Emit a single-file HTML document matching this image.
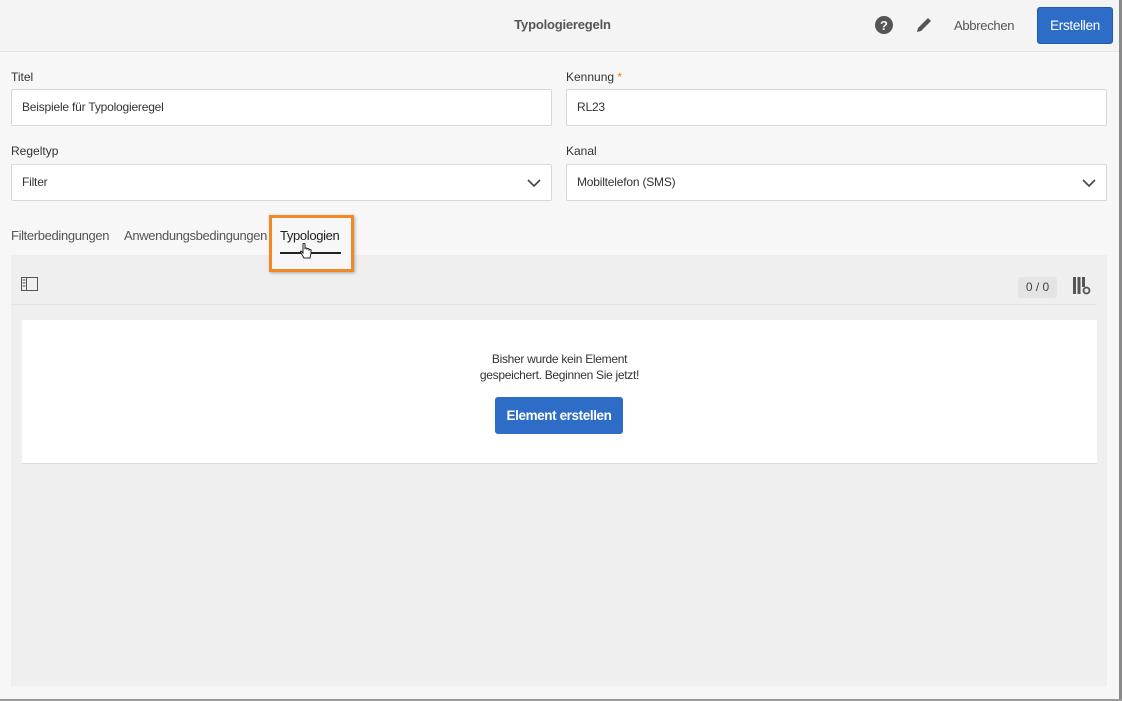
<!DOCTYPE html>
<html><head><meta charset="utf-8"><style>
*{box-sizing:border-box;margin:0;padding:0}
body{width:1122px;height:701px;background:#f7f7f7;font-family:"Liberation Sans",sans-serif;font-size:12px;color:#333;position:relative;overflow:hidden}
.abs{position:absolute}
.hdr{left:0;top:0;width:1119px;height:52px;background:#f4f4f4;border-bottom:1px solid #e6e6e6}
.lbl{font-size:12px;color:#333}
.inp{background:#fff;border:1px solid #d8d8d8;border-radius:2px;height:37px;padding:0 10px;line-height:35px;font-size:12px;color:#333;letter-spacing:-0.2px}
.chev{position:absolute;right:10px;top:11px}
.tab{font-size:13px;color:#555;top:228px;letter-spacing:-0.35px}
</style></head><body>
<div class="abs" style="right:0;top:0;width:3px;height:701px;background:#8a8a8a"></div>
<div class="abs" style="left:0;bottom:0;width:1122px;height:2px;background:#9a9a9a"></div>
<div class="abs hdr"></div>
<div class="abs" style="left:0;width:1125px;top:17px;text-align:center;font-size:13px;font-weight:bold;color:#555;letter-spacing:-0.2px">Typologieregeln</div>
<svg class="abs" style="left:875px;top:16px" width="18" height="18" viewBox="0 0 18 18"><circle cx="9" cy="9" r="9" fill="#555"/><text x="9" y="14" text-anchor="middle" font-family="Liberation Sans" font-weight="bold" font-size="13" fill="#f4f4f4">?</text></svg>
<svg class="abs" style="left:914px;top:15px" width="20" height="20" viewBox="0 0 20 20"><path d="M3 17 L4 13 L14 3 L17 6 L7 16 Z" fill="#555"/></svg>
<div class="abs" style="left:954px;top:18px;font-size:13px;color:#555;letter-spacing:-0.3px">Abbrechen</div>
<div class="abs" style="left:1037px;top:7px;width:76px;height:37px;background:#2d6cc7;border:1px solid #1f5bb0;border-radius:3px;color:#fff;font-size:13.5px;line-height:35px;text-align:center;letter-spacing:-0.3px">Erstellen</div>

<div class="abs lbl" style="left:11px;top:70px">Titel</div>
<div class="abs lbl" style="left:566px;top:70px">Kennung <span style="color:#e68619">*</span></div>
<div class="abs inp" style="left:11px;top:89px;width:541px">Beispiele für Typologieregel</div>
<div class="abs inp" style="left:566px;top:89px;width:541px">RL23</div>
<div class="abs lbl" style="left:11px;top:144px">Regeltyp</div>
<div class="abs lbl" style="left:566px;top:144px">Kanal</div>
<div class="abs inp" style="left:11px;top:164px;width:541px">Filter<svg class="chev" width="14" height="14" viewBox="0 0 14 14"><path d="M1 4 L7 10 L13 4" fill="none" stroke="#444" stroke-width="1.6"/></svg></div>
<div class="abs inp" style="left:566px;top:164px;width:541px">Mobiltelefon (SMS)<svg class="chev" width="14" height="14" viewBox="0 0 14 14"><path d="M1 4 L7 10 L13 4" fill="none" stroke="#444" stroke-width="1.6"/></svg></div>

<div class="abs" style="left:11px;top:255px;width:1096px;height:431px;background:#efefef"></div>
<div class="abs" style="left:11px;top:304px;width:1086px;height:1px;background:#e4e4e4"></div>
<div class="abs tab" style="left:11px">Filterbedingungen</div>
<div class="abs tab" style="left:124px">Anwendungsbedingungen</div>
<div class="abs" style="left:269px;top:215px;width:85px;height:57px;border:3px solid #f08a24;background:#f7f7f7;box-shadow:1px 1px 3px rgba(0,0,0,.3)"></div>
<div class="abs tab" style="left:280px;color:#222">Typologien</div>
<div class="abs" style="left:280px;top:252px;width:61px;height:2px;background:#222"></div>
<svg class="abs" style="left:299px;top:242px" width="14" height="18" viewBox="0 0 14 18"><path d="M4 2 V11 L2 9 Q1 10 2 11 L5 16 H11 L12 11 V8 Q11 7 10 8 V7 Q9 6 8 7 V6.5 Q7 5.5 6 6.5 V2 Q5 1 4 2Z" fill="#fff" stroke="#222" stroke-width="1"/></svg>
<svg class="abs" style="left:21px;top:277px" width="17" height="14" viewBox="0 0 17 14"><rect x="0.5" y="0.5" width="16" height="13" fill="none" stroke="#555"/><path d="M5.5 0.5 V13.5" stroke="#555"/><path d="M1.5 3h3M1.5 6h3M1.5 9h3" stroke="#555"/></svg>
<div class="abs" style="left:1018px;top:277px;width:39px;height:21px;background:#e4e4e4;border-radius:3px;text-align:center;line-height:21px;font-size:12px;color:#444">0 / 0</div>
<svg class="abs" style="left:1073px;top:277px" width="18" height="18" viewBox="0 0 18 18"><rect x="0" y="0" width="3" height="17" fill="#555"/><rect x="4.5" y="0" width="3" height="17" fill="#555"/><rect x="9" y="0" width="3" height="10" fill="#555"/><circle cx="13.5" cy="13.5" r="3" fill="none" stroke="#555" stroke-width="1.8"/></svg>

<div class="abs" style="left:22px;top:320px;width:1075px;height:144px;background:#fff;border-bottom:1px solid #ddd"></div>
<div class="abs" style="left:22px;top:351px;width:1075px;text-align:center;font-size:12px;line-height:16px;color:#333;letter-spacing:-0.3px">Bisher wurde kein Element<br>gespeichert. Beginnen Sie jetzt!</div>
<div class="abs" style="left:495px;top:397px;width:128px;height:37px;background:#2d6cc7;border-radius:3px;color:#fff;font-size:13.5px;font-weight:bold;line-height:37px;text-align:center;letter-spacing:-0.4px">Element erstellen</div>
</body></html>
